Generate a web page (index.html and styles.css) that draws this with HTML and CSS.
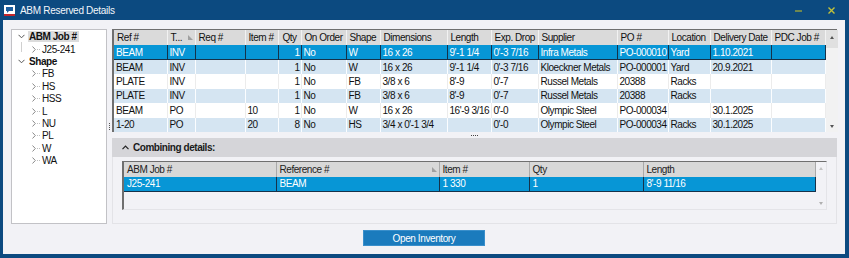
FILE: index.html
```html
<!DOCTYPE html>
<html>
<head>
<meta charset="utf-8">
<link rel="stylesheet" href="styles.css">
</head>
<body>
<div class="window">
  <div class="titlebar">
    <svg class="appicon" width="11" height="11" viewBox="0 0 11 11">
      <rect x="0" y="0" width="11" height="11" fill="#ffffff"/>
      <rect x="0" y="9" width="11" height="2" fill="#c0262c"/>
      <path d="M2 2 H9 V6 H5 L3 8 V6 H2 Z" fill="#1d5fa0"/>
    </svg>
    <span class="title">ABM Reserved Details</span>
    <div class="controls">
      <svg width="9" height="9" viewBox="0 0 9 9" class="btn-min"><path d="M1 5 H8" stroke="#9aa23c" stroke-width="1.4"/></svg>
      <svg width="9" height="9" viewBox="0 0 9 9" class="btn-close"><path d="M1.5 1.5 L7.5 7.5 M7.5 1.5 L1.5 7.5" stroke="#c2c23a" stroke-width="1.4"/></svg>
    </div>
  </div>
  <div class="client">
    <div class="top">
      <div class="tree">
        <div class="node parent"><span class="exp"><svg width="7" height="5" viewBox="0 0 7 5"><path d="M0.5 0.8 L3.5 3.8 L6.5 0.8" stroke="#555" fill="none"/></svg></span><span class="label sel">ABM Job #</span></div>
        <div class="node child line"><span class="exp"><svg width="4" height="7" viewBox="0 0 4 7"><path d="M0.5 0.5 L3.3 3.5 L0.5 6.5" stroke="#8a8a8a" fill="none"/></svg></span><span class="dots"></span><span class="label">J25-241</span></div>
        <div class="node parent"><span class="exp"><svg width="7" height="5" viewBox="0 0 7 5"><path d="M0.5 0.8 L3.5 3.8 L6.5 0.8" stroke="#555" fill="none"/></svg></span><span class="label">Shape</span></div>
        <div class="node child"><span class="exp"><svg width="4" height="7" viewBox="0 0 4 7"><path d="M0.5 0.5 L3.3 3.5 L0.5 6.5" stroke="#8a8a8a" fill="none"/></svg></span><span class="dots"></span><span class="label">FB</span></div>
        <div class="node child"><span class="exp"><svg width="4" height="7" viewBox="0 0 4 7"><path d="M0.5 0.5 L3.3 3.5 L0.5 6.5" stroke="#8a8a8a" fill="none"/></svg></span><span class="dots"></span><span class="label">HS</span></div>
        <div class="node child"><span class="exp"><svg width="4" height="7" viewBox="0 0 4 7"><path d="M0.5 0.5 L3.3 3.5 L0.5 6.5" stroke="#8a8a8a" fill="none"/></svg></span><span class="dots"></span><span class="label">HSS</span></div>
        <div class="node child"><span class="exp"><svg width="4" height="7" viewBox="0 0 4 7"><path d="M0.5 0.5 L3.3 3.5 L0.5 6.5" stroke="#8a8a8a" fill="none"/></svg></span><span class="dots"></span><span class="label">L</span></div>
        <div class="node child"><span class="exp"><svg width="4" height="7" viewBox="0 0 4 7"><path d="M0.5 0.5 L3.3 3.5 L0.5 6.5" stroke="#8a8a8a" fill="none"/></svg></span><span class="dots"></span><span class="label">NU</span></div>
        <div class="node child"><span class="exp"><svg width="4" height="7" viewBox="0 0 4 7"><path d="M0.5 0.5 L3.3 3.5 L0.5 6.5" stroke="#8a8a8a" fill="none"/></svg></span><span class="dots"></span><span class="label">PL</span></div>
        <div class="node child"><span class="exp"><svg width="4" height="7" viewBox="0 0 4 7"><path d="M0.5 0.5 L3.3 3.5 L0.5 6.5" stroke="#8a8a8a" fill="none"/></svg></span><span class="dots"></span><span class="label">W</span></div>
        <div class="node child"><span class="exp"><svg width="4" height="7" viewBox="0 0 4 7"><path d="M0.5 0.5 L3.3 3.5 L0.5 6.5" stroke="#8a8a8a" fill="none"/></svg></span><span class="dots"></span><span class="label">WA</span></div>
      </div>
      <div class="vsplit"><span class="grip-v"></span></div>
      <div class="mainpane">
        <div class="grid">
          <table class="data">
            <colgroup>
              <col style="width:53px"><col style="width:28px"><col style="width:50px"><col style="width:33px"><col style="width:23px"><col style="width:45px"><col style="width:34px"><col style="width:67px"><col style="width:44px"><col style="width:47px"><col style="width:79px"><col style="width:51px"><col style="width:42px"><col style="width:61px"><col style="width:54px">
            </colgroup>
            <thead>
              <tr><th>Ref #</th><th class="sort">T...<span class="sorticon"></span></th><th>Req #</th><th>Item #</th><th class="ctr">Qty</th><th>On Order</th><th>Shape</th><th>Dimensions</th><th>Length</th><th>Exp. Drop</th><th>Supplier</th><th>PO #</th><th>Location</th><th>Delivery Date</th><th>PDC Job #</th></tr>
            </thead>
            <tbody>
              <tr class="selected"><td>BEAM</td><td>INV</td><td></td><td></td><td class="num">1</td><td>No</td><td>W</td><td>16 x 26</td><td>9'-1 1/4</td><td>0'-3 7/16</td><td>Infra Metals</td><td>PO-000010</td><td>Yard</td><td>1.10.2021</td><td></td></tr>
              <tr class="alt"><td>BEAM</td><td>INV</td><td></td><td></td><td class="num">1</td><td>No</td><td>W</td><td>16 x 26</td><td>9'-1 1/4</td><td>0'-3 7/16</td><td>Kloeckner Metals</td><td>PO-000001</td><td>Yard</td><td>20.9.2021</td><td></td></tr>
              <tr><td>PLATE</td><td>INV</td><td></td><td></td><td class="num">1</td><td>No</td><td>FB</td><td>3/8 x 6</td><td>8'-9</td><td>0'-7</td><td>Russel Metals</td><td>20388</td><td>Racks</td><td></td><td></td></tr>
              <tr class="alt"><td>PLATE</td><td>INV</td><td></td><td></td><td class="num">1</td><td>No</td><td>FB</td><td>3/8 x 6</td><td>8'-9</td><td>0'-7</td><td>Russel Metals</td><td>20388</td><td>Racks</td><td></td><td></td></tr>
              <tr><td>BEAM</td><td>PO</td><td></td><td>10</td><td class="num">1</td><td>No</td><td>W</td><td>16 x 26</td><td>16'-9 3/16</td><td>0'-0</td><td>Olympic Steel</td><td>PO-000034</td><td></td><td>30.1.2025</td><td></td></tr>
              <tr class="alt"><td>1-20</td><td>PO</td><td></td><td>20</td><td class="num">8</td><td>No</td><td>HS</td><td>3/4 x 0'-1 3/4</td><td></td><td>0'-0</td><td>Olympic Steel</td><td>PO-000034</td><td>Racks</td><td>30.1.2025</td><td></td></tr>
            </tbody>
          </table>
          <div class="vscroll">
            <span class="upbtn"><span class="arrow up"></span></span>
            <span class="arrow down"></span>
          </div>
        </div>
        <div class="hsplit"><span class="grip-h"></span></div>
        <div class="comb-head">
          <svg width="7" height="5" viewBox="0 0 7 5" class="collapse"><path d="M0.5 4.2 L3.5 1.2 L6.5 4.2" stroke="#222" stroke-width="1.2" fill="none"/></svg>
          <span class="comb-title">Combining details:</span>
        </div>
        <div class="comb-body">
          <div class="grid2">
            <div class="grid2-main">
              <table class="data2">
                <colgroup><col style="width:152px"><col style="width:163px"><col style="width:90px"><col style="width:114px"><col style="width:172px"></colgroup>
                <thead><tr><th>ABM Job #</th><th class="sort">Reference #<span class="sorticon"></span></th><th>Item #</th><th>Qty</th><th>Length</th></tr></thead>
                <tbody><tr class="selected"><td>J25-241</td><td>BEAM</td><td>1 330</td><td>1</td><td>8'-9 11/16</td></tr></tbody>
              </table>
            </div>
            <div class="vscroll2">
              <span class="arrow2 up"></span>
              <span class="arrow2 down"></span>
            </div>
          </div>
        </div>
      </div>
    </div>
    <div class="actions">
      <button class="primary">Open Inventory</button>
    </div>
  </div>
</div>
</body>
</html>
```

FILE: styles.css
```css
* { box-sizing: border-box; }
html, body { margin: 0; padding: 0; }
body {
  width: 849px;
  height: 258px;
  overflow: hidden;
  background: #0c4a80;
  font-family: "Liberation Sans", Arial, sans-serif;
  font-size: 10px;
  letter-spacing: -0.45px;
  color: #111;
}
.window {
  width: 849px;
  height: 258px;
  display: flex;
  flex-direction: column;
}
.titlebar {
  height: 20px;
  display: flex;
  align-items: center;
  padding-left: 4px;
  color: #fff;
}
.title {
  margin-left: 5px;
  font-size: 10px;
  letter-spacing: -0.3px;
  color: #f2f6fa;
}
.controls {
  margin-left: auto;
  display: flex;
  align-items: center;
  gap: 24px;
  padding-right: 13px;
}
.client {
  flex: 1;
  margin: 0 4px 4px 3px;
  background: #f2f2f6;
  padding: 9px 8px 0 8px;
  display: flex;
  flex-direction: column;
}
.top {
  height: 195px;
  display: flex;
}
/* tree */
.tree {
  width: 96px;
  height: 195px;
  background: #fff;
  border: 1px solid #c2c2c6;
  padding-top: 0.5px;
}
.node {
  height: 12.4px;
  display: flex;
  align-items: center;
  position: relative;
  white-space: nowrap;
}
.node.parent { padding-left: 6px; font-weight: bold; }
.node.parent .exp { width: 10px; display: flex; align-items: center; }
.node.child { padding-left: 20px; }
.node.child .exp { width: 5px; display: flex; align-items: center; }
.node.child .dots {
  width: 3px;
  height: 1px;
  margin-right: 1px;
  border-top: 1px dotted #c0c0c0;
}
.node.line::before {
  content: "";
  position: absolute;
  left: 9px;
  top: -1px;
  height: 10px;
  border-left: 1px solid #d0d0d0;
}
.label { padding: 0 1px; line-height: 11px; }
.label.sel { background: #dcdcdc; padding: 0 2px 0 1px; }
.vsplit {
  width: 5px;
  display: flex;
  align-items: center;
  justify-content: center;
}
.grip-v {
  width: 1px;
  height: 7px;
  border-left: 1px dotted #555;
}
/* main pane */
.mainpane {
  width: 725px;
  display: flex;
  flex-direction: column;
}
.grid {
  height: 103px;
  display: flex;
  border-top: 1px solid #6f6f6f;
  border-left: 2px solid #6f6f6f;
  background: #fff;
}
table {
  border-collapse: collapse;
  table-layout: fixed;
}
.data { width: 711px; }
.data th {
  height: 15px;
  background: #dadada;
  font-weight: normal;
  text-align: left;
  padding: 0 2px 0 3px;
  border-right: 1px solid #f2f2f2;
  white-space: nowrap;
  overflow: hidden;
  color: #111;
}
.data th.ctr { text-align: center; padding: 0; }
th.sort { position: relative; }
.sorticon {
  position: absolute;
  right: 2px;
  top: 5px;
  width: 0;
  height: 0;
  border-left: 5px solid transparent;
  border-bottom: 5px solid #a0a0a0;
  transform: scaleX(-1);
}
.data td {
  height: 14.5px;
  padding: 0 1px 0 2px;
  white-space: nowrap;
  overflow: hidden;
  border-right: 1px solid #ececec;
  background: #fff;
}
.data td.num { text-align: right; padding-right: 1px; }
.data tr.alt td { background: #d5e5f2; border-right-color: #fbfdff; }
.data tr.selected td {
  background: #0796d6;
  color: #fff;
  border-right: 1px solid #16324a;
  border-bottom: 1px solid #16324a;
}
.vscroll {
  width: 12px;
  display: flex;
  flex-direction: column;
  align-items: center;
  background: #f2f2f2;
}
.upbtn {
  width: 12px;
  height: 18px;
  background: #e0e0e0;
  display: flex;
  justify-content: center;
  padding-top: 6px;
}
.arrow { width: 0; height: 0; border-left: 2.5px solid transparent; border-right: 2.5px solid transparent; }
.arrow.up { border-bottom: 3px solid #555; }
.arrow.down { border-top: 3px solid #555; margin-top: auto; margin-bottom: 4px; }
.hsplit {
  height: 6px;
  display: flex;
  justify-content: center;
  align-items: center;
}
.grip-h {
  width: 7px;
  height: 1px;
  border-top: 1px dotted #444;
}
.comb-head {
  height: 19px;
  background: #d5d5d9;
  display: flex;
  align-items: center;
  padding-left: 10px;
}
.collapse { margin-right: 4px; }
.comb-title { font-weight: bold; color: #1a1a1a; }
.comb-body {
  height: 67px;
  border: 1px solid #e3e3e7;
  border-top: none;
  padding: 4px 9px 0 9px;
}
.grid2 {
  width: 705px;
  height: 49px;
  display: flex;
  border-top: 1px solid #6f6f6f;
  border-left: 2px solid #6f6f6f;
  border-bottom: 1px solid #e4e4e8;
  border-right: 1px solid #e4e4e8;
}
.grid2-main { width: 691px; }
.data2 { width: 691px; }
.data2 th {
  height: 15px;
  background: #d8d8d8;
  font-weight: normal;
  text-align: left;
  padding: 0 3px;
  border-right: 1px solid #a9a9a9;
  color: #222;
}
.data2 td {
  height: 14px;
  padding: 0 3px;
  background: #0796d6;
  color: #fff;
  border-right: 1px solid #16324a;
  border-bottom: 1px solid #16324a;
}
.vscroll2 {
  width: 12px;
  display: flex;
  flex-direction: column;
  align-items: center;
}
.arrow2 { width: 0; height: 0; border-left: 2.5px solid transparent; border-right: 2.5px solid transparent; }
.arrow2.up { border-bottom: 3px solid #c4c4c4; margin-top: 5px; }
.arrow2.down { border-top: 3px solid #b0b0b0; margin-top: auto; margin-bottom: 4px; }
.actions {
  display: flex;
  justify-content: center;
  padding-top: 6px;
}
.primary {
  width: 122px;
  height: 16px;
  background: #1b7bbd;
  border: 1px solid #3a8fcb;
  color: #fff;
  font-family: "Liberation Sans", Arial, sans-serif;
  font-size: 10px;
  letter-spacing: -0.4px;
  padding: 0;
}
```
